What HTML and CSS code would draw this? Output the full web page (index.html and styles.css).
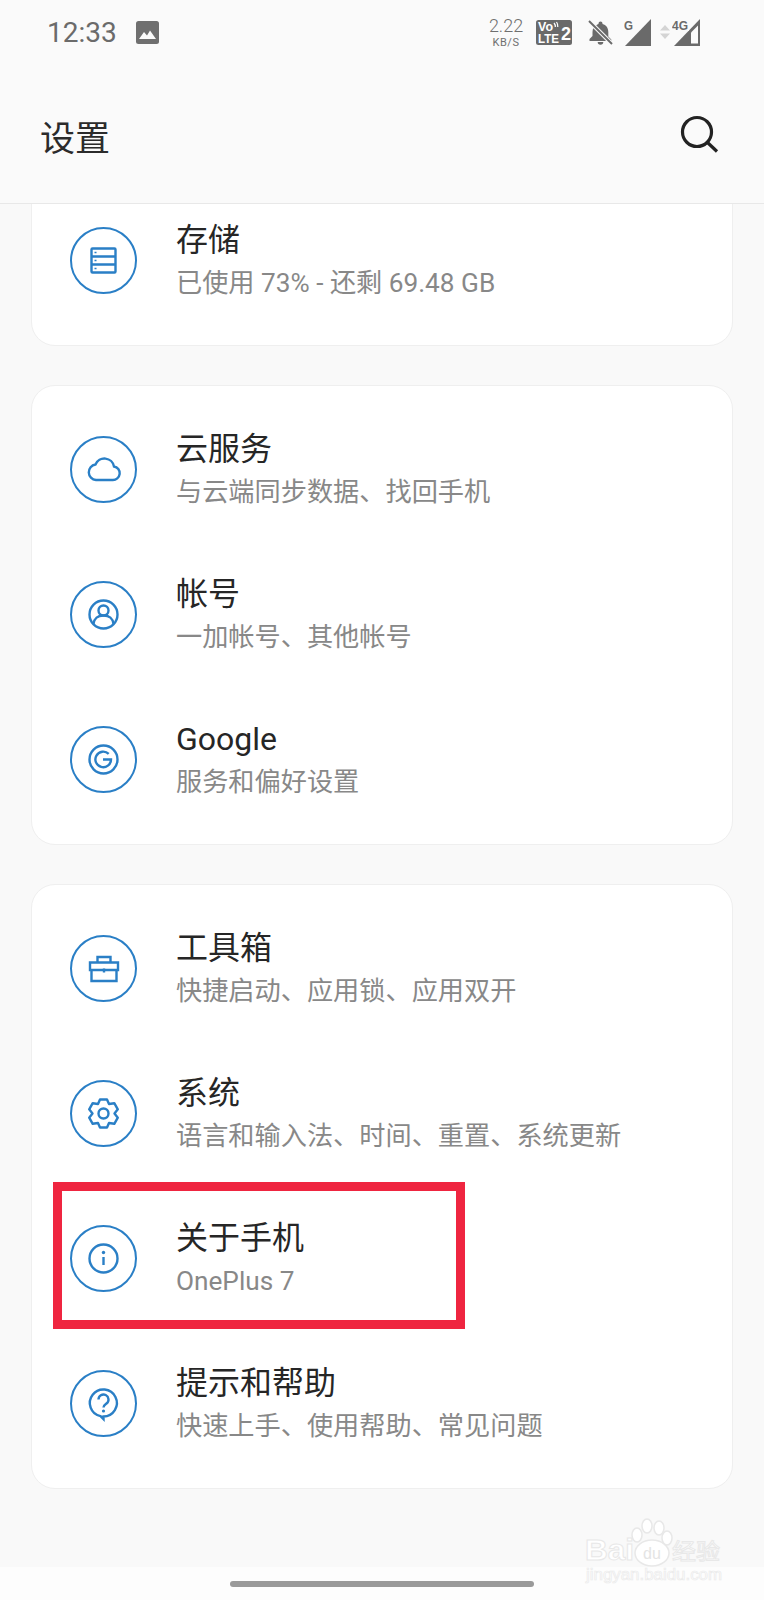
FILE: index.html
```html
<!DOCTYPE html>
<html>
<head>
  <meta charset="UTF-8">
  <title>设置</title>
  <link rel="stylesheet" href="styles.css">
</head>
<body>
  <header class="header">
    <div class="statusbar">
      <div class="status-left">
        <span class="time">12:33</span>
        <svg class="pic-icon" width="23" height="23" viewBox="0 0 23 23">
          <rect width="23" height="23" rx="2.5" fill="#6f6f6f"/>
          <path d="M3 18l5-7 3 3.5 3-5 6 8.500z" fill="#fafafa"/>
        </svg>
      </div>
      <div class="status-right">
        <div class="speed">
          <span class="speed-num">2.22</span>
          <span class="speed-unit">KB/S</span>
        </div>
        <svg class="volte" width="36" height="25" viewBox="0 0 36 25">
          <rect width="36" height="25" rx="2.500" fill="#6a6a6a"/>
          <text class="volte-text" x="2" y="11" textLength="15" lengthAdjust="spacingAndGlyphs">Vo</text>
          <path d="M18 3a5 5 0 0 1 1.300 4M20.500 2a7 7 0 0 1 1.300 5" fill="none" stroke="#fff" stroke-width="1.200"/>
          <text class="volte-text" x="2" y="23" textLength="21" lengthAdjust="spacingAndGlyphs">LTE</text>
          <text class="volte-two" x="25" y="20" textLength="10" lengthAdjust="spacingAndGlyphs">2</text>
        </svg>
        <svg class="bell" width="25" height="25" viewBox="0 0 25 25">
          <path d="M12.500 1.500a2 2 0 0 1 2 2v.6c3.800 1 5.800 4 5.800 7.900v4.500l3 3v1.500H1.500V19l3-3v-4c0-1.700.4-3.200 1.200-4.500l2.600-2.200c.7-.5 1.400-.9 2.200-1.200v-.6a2 2 0 0 1 2-2zM9.700 22h5.600a2.800 2.800 0 0 1-5.600 0z" fill="#6a6a6a"/>
          <path d="M1.500 1.500l22 22" stroke="#fafafa" stroke-width="4"/>
          <path d="M1 1l23 23" stroke="#6a6a6a" stroke-width="2"/>
        </svg>
        <svg class="signal-g" width="28" height="27" viewBox="0 0 28 27">
          <path d="M27 0v27H1z" fill="#6a6a6a"/>
          <path d="M0 0h11v12H0z" fill="#fafafa"/>
          <text class="net-text" x="0" y="11" textLength="9" lengthAdjust="spacingAndGlyphs">G</text>
        </svg>
        <svg class="updown" width="10" height="14" viewBox="0 0 10 14">
          <path d="M5 0l5 5.500H0zM5 14l5-5.500H0z" fill="#d4d4d4"/>
        </svg>
        <svg class="signal-4g" width="29" height="27" viewBox="0 0 29 27">
          <path d="M28 0v27H2z" fill="#6a6a6a"/>
          <path d="M26 6.500V24.500h-7V13.500z" fill="#fafafa"/>
          <path d="M0 0h17v12H0z" fill="#fafafa"/>
          <text class="net-text" x="0" y="11" textLength="16" lengthAdjust="spacingAndGlyphs">4G</text>
        </svg>
      </div>
    </div>
    <div class="appbar">
      <h1 class="page-title">设置</h1>
      <svg class="search" width="40" height="40" viewBox="0 0 40 40">
        <circle cx="17" cy="17" r="14.500" fill="none" stroke="#222" stroke-width="3.200"/>
        <path d="M27.500 27.500L37 36.500" stroke="#222" stroke-width="3.200"/>
      </svg>
    </div>
  </header>

  <main class="list">
    <section class="card card-cut">
      <div class="row">
        <svg class="icon" viewBox="0 0 67 67">
          <circle class="ring" cx="33.500" cy="33.500" r="32.500"/>
          <rect class="line" x="21.500" y="21.500" width="24" height="24" rx="1"/>
          <path class="line" d="M21.500 29.500h24M21.500 37.500h24"/>
          <path class="line thin" d="M24.500 25.500h2M24.500 33.500h2M24.500 41.500h2"/>
        </svg>
        <div class="row-text">
          <div class="title">存储</div>
          <div class="sub">已使用 73% - 还剩 69.48 GB</div>
        </div>
      </div>
    </section>

    <section class="card">
      <div class="row">
        <svg class="icon" viewBox="0 0 67 67">
          <circle class="ring" cx="33.500" cy="33.500" r="32.500"/>
          <path class="line" d="M26 44h16.500a6.800 6.800 0 0 0 1.500-13.500a9.700 9.700 0 0 0-18.500-2a7.800 7.800 0 0 0 .5 15.500z"/>
        </svg>
        <div class="row-text">
          <div class="title">云服务</div>
          <div class="sub">与云端同步数据、找回手机</div>
        </div>
      </div>
      <div class="row">
        <svg class="icon" viewBox="0 0 67 67">
          <circle class="ring" cx="33.500" cy="33.500" r="32.500"/>
          <circle class="line" cx="33.500" cy="33.500" r="14"/>
          <circle class="line" cx="33.500" cy="29.500" r="5"/>
          <path class="line" d="M23.500 43c.5-5.500 4.500-8.500 10-8.500s9.500 3 10 8.500"/>
        </svg>
        <div class="row-text">
          <div class="title">帐号</div>
          <div class="sub">一加帐号、其他帐号</div>
        </div>
      </div>
      <div class="row">
        <svg class="icon" viewBox="0 0 67 67">
          <circle class="ring" cx="33.500" cy="33.500" r="32.500"/>
          <circle class="line" cx="33.500" cy="33.500" r="14"/>
          <path class="line" d="M33 33.500h8a7.800 7.800 0 1 1-2.300-5.600"/>
        </svg>
        <div class="row-text">
          <div class="title">Google</div>
          <div class="sub">服务和偏好设置</div>
        </div>
      </div>
    </section>

    <section class="card">
      <div class="row">
        <svg class="icon" viewBox="0 0 67 67">
          <circle class="ring" cx="33.500" cy="33.500" r="32.500"/>
          <path class="line" d="M20 27.500h28v7.500H20zM21.500 35v11h25V35M27.500 27.500v-5.500h13v5.500"/>
          <path class="line" d="M34 33.500v4"/>
        </svg>
        <div class="row-text">
          <div class="title">工具箱</div>
          <div class="sub">快捷启动、应用锁、应用双开</div>
        </div>
      </div>
      <div class="row">
        <svg class="icon" viewBox="0 0 67 67">
          <circle class="ring" cx="33.500" cy="33.500" r="32.500"/>
          <path class="line gear" d="M30 19.500H37L39 24L44.300 23.200L47.800 29.300L44.500 33.500L47.800 37.700L44.300 43.800L39 43L37 47.500H30L28 43L22.700 43.800L19.200 37.700L22.500 33.500L19.200 29.300L22.700 23.200L28 24z"/>
          <circle class="line" cx="33.500" cy="33.500" r="5"/>
        </svg>
        <div class="row-text">
          <div class="title">系统</div>
          <div class="sub">语言和输入法、时间、重置、系统更新</div>
        </div>
      </div>
      <div class="row">
        <svg class="icon" viewBox="0 0 67 67">
          <circle class="ring" cx="33.500" cy="33.500" r="32.500"/>
          <circle class="line" cx="33.500" cy="33.500" r="14"/>
          <path class="line" d="M33.500 32v8"/>
          <circle cx="33.500" cy="27.500" r="1.700" fill="#2a7fc6"/>
        </svg>
        <div class="row-text">
          <div class="title">关于手机</div>
          <div class="sub">OnePlus 7</div>
        </div>
      </div>
      <div class="row">
        <svg class="icon" viewBox="0 0 67 67">
          <circle class="ring" cx="33.500" cy="33.500" r="32.500"/>
          <path class="line" d="M33.500 46.500a13.500 13.500 0 1 0-3-.3l3 3z"/>
          <path class="line" d="M28.500 29.500a5 5 0 1 1 8 4c-1.800 1.300-3 2-3 4"/>
          <circle cx="33.500" cy="41" r="1.600" fill="#2a7fc6"/>
        </svg>
        <div class="row-text">
          <div class="title">提示和帮助</div>
          <div class="sub">快速上手、使用帮助、常见问题</div>
        </div>
      </div>
    </section>
  </main>

  <footer class="navbar">
    <div class="home-pill"></div>
  </footer>

  <!-- red marker and watermark sit over the screenshot -->
  <div class="marker"></div>
  <svg class="watermark" width="140" height="70" viewBox="0 0 140 70">
    <text class="wm-big" x="1" y="44" textLength="49" lengthAdjust="spacingAndGlyphs">Bai</text>
    <ellipse class="wm-line" cx="68" cy="37" rx="17" ry="13"/>
    <ellipse class="wm-line" cx="53" cy="19" rx="5" ry="7"/>
    <ellipse class="wm-line" cx="63" cy="10" rx="5" ry="7"/>
    <ellipse class="wm-line" cx="75" cy="12" rx="5" ry="7"/>
    <ellipse class="wm-line" cx="83" cy="22" rx="5" ry="7"/>
    <text class="wm-du" x="59" y="43">du</text>
    <text class="wm-cn" x="88" y="43" textLength="48" lengthAdjust="spacingAndGlyphs">经验</text>
    <text class="wm-url" x="2" y="64" textLength="136" lengthAdjust="spacingAndGlyphs">jingyan.baidu.com</text>
  </svg>
</body>
</html>
```

FILE: styles.css
```css
html, body {
  margin: 0;
  height: 1600px;
  overflow: hidden;
}

body {
  position: relative;
  background: #f9f9f9;
  font-family: Roboto, "Noto Sans CJK SC", sans-serif;
  display: flex;
  flex-direction: column;
}

.header {
  height: 203px;
  flex: none;
  background: #fafafa;
  border-bottom: 1px solid #e8e8e8;
}

.statusbar {
  height: 64px;
  display: flex;
  justify-content: space-between;
  align-items: center;
  padding: 0 63px 0 47px;
}

.status-left {
  display: flex;
  align-items: center;
  gap: 19px;
}

.time {
  font-size: 28px;
  color: #6b6b6b;
}

.status-right {
  display: flex;
  align-items: center;
}

.speed {
  display: flex;
  flex-direction: column;
  align-items: center;
  width: 32px;
  color: #6f6f6f;
  margin-right: 14px;
}

.speed-num {
  font-size: 18px;
  line-height: 21px;
  font-weight: 300;
}

.speed-unit {
  font-size: 11px;
  line-height: 13px;
  letter-spacing: 0.6px;
}

.volte-text {
  font-family: "Liberation Sans", sans-serif;
  font-size: 13px;
  font-weight: bold;
  fill: #fff;
}

.volte-two {
  font-family: "Liberation Sans", sans-serif;
  font-size: 18px;
  font-weight: bold;
  fill: #fff;
}

.net-text {
  font-family: "Liberation Sans", sans-serif;
  font-size: 13px;
  font-weight: bold;
  fill: #6a6a6a;
}

.bell {
  margin: 0 11px 0 16px;
}

.updown {
  margin: 0 2px 0 8px;
}

.appbar {
  height: 139px;
  display: flex;
  justify-content: space-between;
  align-items: flex-start;
  padding: 0 44px 0 40px;
}

.page-title {
  margin: 50px 0 0;
  font-size: 35px;
  line-height: 52px;
  font-weight: 400;
  color: #2b2b2b;
}

.search {
  margin-top: 51px;
}

.list {
  height: 1363px;
  flex: none;
  overflow: hidden;
  display: flex;
  flex-direction: column;
  gap: 39px;
  padding: 0 31px;
}

.card {
  flex: none;
  background: #fff;
  border: 1px solid #efefef;
  border-radius: 24px;
  padding: 11px 0 12px;
}

.card-cut {
  margin-top: -28px;
}

.row {
  height: 145px;
  display: flex;
  align-items: center;
  padding-left: 38px;
  gap: 39px;
}

.icon {
  width: 67px;
  height: 67px;
  flex: none;
}

.ring {
  fill: none;
  stroke: #2a7fc6;
  stroke-width: 2;
}

.line {
  fill: none;
  stroke: #2a7fc6;
  stroke-width: 2.4;
}

.gear {
  stroke-linejoin: round;
}

.thin {
  stroke-width: 1.6;
}

.title {
  font-size: 32px;
  line-height: 46px;
  color: #262626;
}

.sub {
  margin-top: -2px;
  font-size: 26.2px;
  line-height: 44px;
  color: #888;
}

.navbar {
  flex: 1;
  background: #fdfdfd;
  display: flex;
  justify-content: center;
  padding-top: 14px;
}

.home-pill {
  width: 304px;
  height: 6px;
  margin-left: -1px;
  border-radius: 3px;
  background: #9a9a9a;
}

.marker {
  position: absolute;
  left: 53px;
  top: 1182px;
  width: 412px;
  height: 147px;
  box-sizing: border-box;
  border: 9px solid #ef2540;
}

.watermark {
  position: absolute;
  left: 584px;
  top: 1516px;
}

.wm-big {
  font-family: "Liberation Sans", sans-serif;
  font-size: 30px;
  font-weight: bold;
  fill: #fff;
  stroke: #e8e8e8;
}

.wm-line {
  fill: #fff;
  stroke: #e8e8e8;
  stroke-width: 1.5;
}

.wm-du {
  font-family: "Liberation Sans", sans-serif;
  font-size: 16px;
  fill: #e4e4e4;
}

.wm-cn {
  font-family: "Noto Sans CJK SC", sans-serif;
  font-size: 22px;
  fill: #fff;
  stroke: #e8e8e8;
}

.wm-url {
  font-family: "Liberation Sans", sans-serif;
  font-size: 16px;
  fill: #fff;
  stroke: #ebebeb;
  stroke-width: 0.7;
}
```
